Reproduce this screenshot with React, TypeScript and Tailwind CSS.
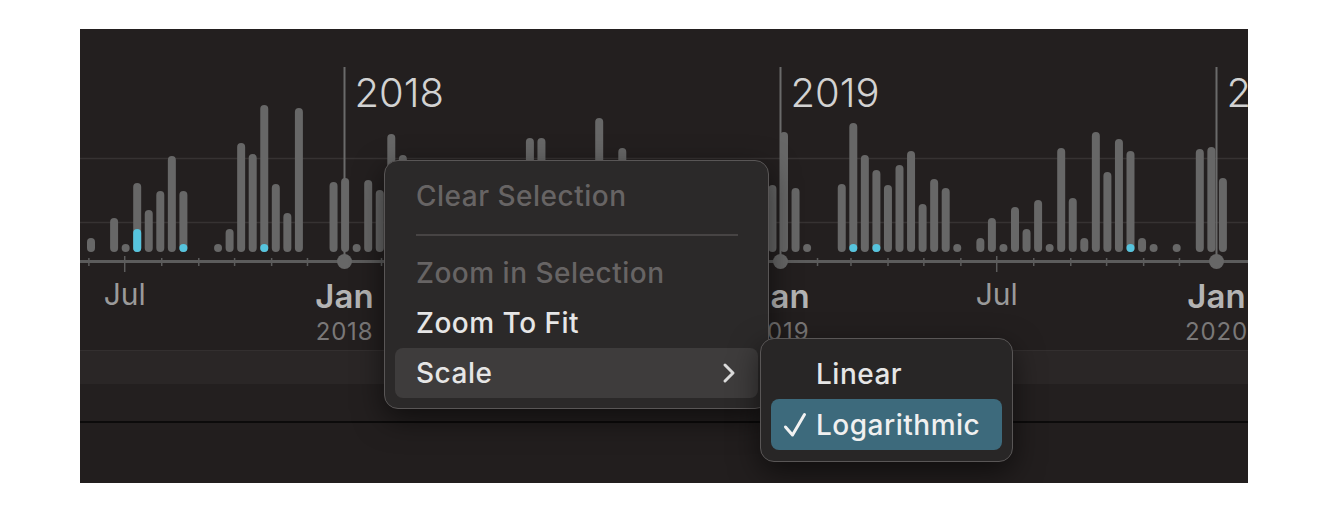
import React from 'react';

const YEAR_W = 436;
const JAN_2018 = 344.5;
const SLOT0 = 91;
const STEP = 11.55;
const BASE = 252;
const MONTH_DAYS = [0, 31, 59, 90, 120, 151, 181, 212, 243, 273, 304, 334];

// [slot, top, accent]  top 0 = dot, accent: c = cyan dot, f = cyan fill
const bars: [number, number, string?][] = [
  [0, 238], [2, 218], [3, 0], [4, 183, 'f'], [5, 210], [6, 191], [7, 156], [8, 191, 'c'],
  [11, 0], [12, 229], [13, 143], [14, 154], [15, 105, 'c'], [16, 184], [17, 213], [18, 108],
  [21, 182], [22, 178], [23, 0], [24, 180], [25, 190], [26, 134], [27, 155], [28, 200],
  [29, 0], [30, 215], [31, 190], [33, 225], [34, 180], [35, 205], [36, 170], [37, 195],
  [38, 138], [39, 138], [40, 175], [41, 200], [42, 0], [43, 185], [44, 118], [45, 190],
  [46, 148], [47, 210], [48, 175], [49, 230], [50, 0], [52, 195], [53, 185], [54, 220],
  [55, 170], [56, 200], [57, 240], [58, 185], [59, 185], [60, 132], [61, 188], [62, 0],
  [65, 184], [66, 123, 'c'], [67, 155], [68, 170, 'c'], [69, 185], [70, 165], [71, 151],
  [72, 204], [73, 179], [74, 188], [75, 0], [77, 238], [78, 218], [79, 0], [80, 207],
  [81, 229], [82, 200], [83, 0], [84, 148], [85, 198], [86, 238], [87, 132], [88, 172],
  [89, 139], [90, 151, 'c'], [91, 238], [92, 0], [94, 0], [96, 149], [97, 147], [98, 178],
];

const years = [2017, 2018, 2019, 2020];
const FONT = "Inter, 'Noto Sans', sans-serif";

function Chart() {
  const ticks: { x: number; jul: boolean; year: number }[] = [];
  years.forEach((y) => {
    const jan = JAN_2018 + (y - 2018) * YEAR_W;
    MONTH_DAYS.slice(1).forEach((d) => {
      const x = jan + (YEAR_W * d) / 365;
      if (x > 80 && x < 1248) ticks.push({ x, jul: d === 181, year: y });
    });
  });

  return (
    <svg width={1168} height={321} viewBox="80 29 1168 321" className="block shrink-0">
      {/* grid */}
      <line x1={80} x2={1248} y1={158.5} y2={158.5} stroke="#363232" strokeWidth={1.5} />
      <line x1={80} x2={1248} y1={222.5} y2={222.5} stroke="#363232" strokeWidth={1.5} />

      {/* year markers */}
      {[2018, 2019, 2020].map((y) => {
        const x = JAN_2018 + (y - 2018) * YEAR_W;
        return (
          <g key={y}>
            <line x1={x} x2={x} y1={67} y2={261} stroke="#6a6a6a" strokeWidth={2} />
            <text x={x + 10} y={107} fontSize={40} fontWeight={300} fill="#d2d2d2" fontFamily={FONT}>
              {y}
            </text>
          </g>
        );
      })}

      {/* bars */}
      {bars.map(([slot, top, accent]) => {
        const cx = SLOT0 + slot * STEP;
        const t = top === 0 ? BASE - 8 : top;
        return (
          <g key={slot}>
            <rect x={cx - 4} y={t} width={8} height={BASE - t} rx={4} fill="#676767" />
            {accent === 'c' && <rect x={cx - 4} y={BASE - 8} width={8} height={8} rx={4} fill="#56c4de" />}
            {accent === 'f' && <rect x={cx - 4} y={229} width={8} height={BASE - 229} rx={4} fill="#56c4de" />}
          </g>
        );
      })}

      {/* axis */}
      <line x1={80} x2={1248} y1={261.5} y2={261.5} stroke="#5c5c5c" strokeWidth={3} />
      {ticks.map((t, i) => (
        <line
          key={i}
          x1={t.x}
          x2={t.x}
          y1={t.jul ? 256 : 258}
          y2={t.jul ? 272 : 266}
          stroke="#5c5c5c"
          strokeWidth={1.5}
        />
      ))}
      {[2018, 2019, 2020].map((y) => (
        <circle key={y} cx={JAN_2018 + (y - 2018) * YEAR_W} cy={261.5} r={7.5} fill="#676767" />
      ))}

      {/* axis labels (Jul 2018 sits under the menu) */}
      {ticks
        .filter((t) => t.jul && t.year !== 2018)
        .map((t, i) => (
          <text key={i} x={t.x} y={305} textAnchor="middle" fontSize={30} fill="#9a9a9a" fontFamily={FONT}>
            Jul
          </text>
        ))}
      {[2018, 2019, 2020].map((y) => {
        const x = JAN_2018 + (y - 2018) * YEAR_W;
        return (
          <g key={y} fontFamily={FONT} textAnchor="middle">
            <text x={x} y={308} fontSize={33} fontWeight={600} fill="#b4b4b4">
              Jan
            </text>
            <text x={x} y={340} fontSize={24} fill="#7a7878" letterSpacing={0.8}>
              {y}
            </text>
          </g>
        );
      })}
    </svg>
  );
}

function MenuRow({
  label,
  disabled,
  active,
  chevron,
}: {
  label: string;
  disabled?: boolean;
  active?: boolean;
  chevron?: boolean;
}) {
  return (
    <div
      className={`flex h-[50px] items-center justify-between rounded-[8px] pl-[21px] pr-[22px] ${
        active ? 'bg-[#3e3c3c]' : ''
      }`}
    >
      <span className={disabled ? 'text-[#676464]' : 'text-[#e6e6e6]'}>{label}</span>
      {chevron && (
        <svg width={14} height={22} viewBox="0 0 14 22">
          <polyline
            points="3,3 11,11 3,19"
            fill="none"
            stroke="#dcdcdc"
            strokeWidth={3}
            strokeLinecap="round"
            strokeLinejoin="round"
          />
        </svg>
      )}
    </div>
  );
}

function ContextMenu() {
  return (
    <div className="absolute left-[304px] top-[131px] w-[385px] rounded-[14px] border border-[#595656] bg-[#2b2929] p-[10px] text-[28px] font-medium tracking-[0.5px] shadow-[0_10px_30px_rgba(0,0,0,0.55)]">
      <MenuRow label="Clear Selection" disabled />
      <div className="flex h-[27px] items-center pl-[21px] pr-[20px]">
        <div className="h-[2px] w-full bg-[#474444]" />
      </div>
      <MenuRow label="Zoom in Selection" disabled />
      <MenuRow label="Zoom To Fit" />
      <MenuRow label="Scale" active chevron />
    </div>
  );
}

function ScaleSubmenu() {
  return (
    <div className="absolute left-[680px] top-[309px] w-[253px] rounded-[14px] border border-[#595656] bg-[#282626] px-[10px] pb-[11px] pt-[10px] text-[28px] font-medium tracking-[0.5px] text-[#e6e6e6] shadow-[0_10px_30px_rgba(0,0,0,0.55)]">
      <div className="flex h-[50px] items-center pl-[45px]">Linear</div>
      <div className="flex h-[51px] items-center rounded-[8px] bg-[#3d6a7c]">
        <div className="flex w-[45px] justify-start pl-[12px]">
          <svg width={24} height={26} viewBox="0 0 24 26">
            <path
              d="M2.5 15 L9.5 23 L21.5 2.5"
              fill="none"
              stroke="#f2f2f2"
              strokeWidth={3}
              strokeLinecap="round"
              strokeLinejoin="round"
            />
          </svg>
        </div>
        <span className="text-[#f0f0f0]">Logarithmic</span>
      </div>
    </div>
  );
}

export default function App() {
  return (
    <div className="h-[522px] w-full bg-white pl-[80px] pt-[29px]" style={{ fontFamily: FONT }}>
      <div className="relative flex h-[454px] w-[1168px] flex-col overflow-hidden bg-[#231f1f]">
        <Chart />
        <div className="h-[34px] shrink-0 border-t border-[#332f2f] bg-[#2a2626]" />
        <div className="h-[37px] shrink-0" />
        <div className="h-[2px] shrink-0 bg-[#0c0b0b]" />
        <div className="flex-1 bg-[#221e1e]" />

        <ContextMenu />
        <ScaleSubmenu />
      </div>
    </div>
  );
}
